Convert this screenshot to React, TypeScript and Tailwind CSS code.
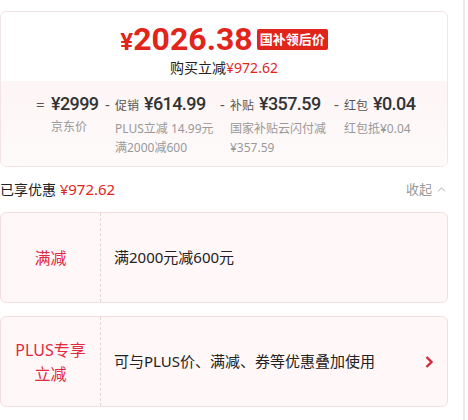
import { ChevronUp } from "lucide-react";

const font = { fontFamily: '"Noto Sans", "Noto Sans CJK SC", sans-serif' };
const numFont = { fontFamily: 'Roboto, "Noto Sans", sans-serif' };

type Part = { sign: string; label?: string; price: string; notes: string[]; width: string; signW: string };

const parts: Part[] = [
  { sign: "=", price: "¥2999", notes: ["京东价"], width: "w-[69px]", signW: "w-[15px]" },
  { sign: "-", label: "促销", price: "¥614.99", notes: ["PLUS立减 14.99元", "满2000减600"], width: "w-[115px]", signW: "w-[10px]" },
  { sign: "-", label: "补贴", price: "¥357.59", notes: ["国家补贴云闪付减", "¥357.59"], width: "w-[114px]", signW: "w-[10px]" },
  { sign: "-", label: "红包", price: "¥0.04", notes: ["红包抵¥0.04"], width: "w-[100px]", signW: "w-[10px]" },
];

function PriceCard() {
  return (
    <div className="overflow-hidden rounded-[6px] border border-[#f3e4e6] bg-white">
      <div className="flex flex-col items-center pt-[9px]">
        <div className="flex h-[36px] items-center">
          <span style={numFont} className="text-[32px] font-bold leading-[32px] text-[#e1251b]">
            <span className="text-[24px] leading-none">¥</span>2026.38
          </span>
          <span className="ml-[4px] rounded-[2px] bg-[#e1251b] px-[3px] text-[13px] font-bold leading-[21px] text-white">
            国补领后价
          </span>
        </div>
        <div className="mt-[1px] text-[14px] leading-[20px] text-[#222]">
          购买立减<span className="text-[#e1251b]">¥972.62</span>
        </div>
      </div>
      <div className="mt-[3px] flex bg-gradient-to-b from-[#fdf5f6] to-[#fefafa] pb-[9px] pl-[35px] pt-[12px]">
        {parts.map((p) => (
          <div key={p.price} className={`flex shrink-0 ${p.width}`}>
            <span className={`${p.signW} shrink-0 text-[15px] leading-[22px] text-[#555]`}>{p.sign}</span>
            <div className="flex flex-col">
              <div className="flex items-baseline whitespace-nowrap leading-[22px] text-[#333]">
                {p.label && <span className="mr-[5px] text-[12px] text-[#555]">{p.label}</span>}
                <span style={numFont} className="text-[18px] font-medium tracking-[-0.6px]">
                  {p.price}
                </span>
              </div>
              <div className="mt-[2px] text-[12px] leading-[19px] text-[#999]">
                {p.notes.map((n) => (
                  <div key={n} className="whitespace-nowrap">
                    {n}
                  </div>
                ))}
              </div>
            </div>
          </div>
        ))}
      </div>
    </div>
  );
}

function PromoCard({ title, text, arrow }: { title: string[]; text: string; arrow?: boolean }) {
  return (
    <div className="flex h-[91px] rounded-[6px] border border-[#f3dfe2] bg-[#fff7f8]">
      <div className="flex w-[100px] shrink-0 flex-col items-center justify-center border-r border-dashed border-[#e8d2d6] text-[16px] leading-[24px] text-[#e3283e]">
        {title.map((t) => (
          <span key={t}>{t}</span>
        ))}
      </div>
      <div className="flex flex-1 items-center pl-[13px] pr-[12px] text-[15px] text-[#222]">
        <span className="flex-1">{text}</span>
        {arrow && (
          <svg width="10" height="14" viewBox="0 0 10 14" className="mr-[1px]">
            <polyline points="2.5,2 7.5,7 2.5,12" fill="none" stroke="#d8263a" strokeWidth="2.4" />
          </svg>
        )}
      </div>
    </div>
  );
}

export default function App() {
  return (
    <div style={font} className="h-[420px] w-[465px] border-r-2 border-[#ebebeb] bg-white pr-[15px] pt-[11px]">
      <PriceCard />
      <div className="flex h-[45px] items-center justify-between">
        <div className="text-[14px] text-[#222]">
          已享优惠 <span className="text-[15px] text-[#e1251b]">¥972.62</span>
        </div>
        <div className="flex items-center text-[13px] text-[#999]">
          收起
          <ChevronUp className="ml-[3px] size-[13px]" strokeWidth={1.5} />
        </div>
      </div>
      <div className="flex flex-col gap-[13px]">
        <PromoCard title={["满减"]} text="满2000元减600元" />
        <PromoCard title={["PLUS专享", "立减"]} text="可与PLUS价、满减、券等优惠叠加使用" arrow />
      </div>
    </div>
  );
}
